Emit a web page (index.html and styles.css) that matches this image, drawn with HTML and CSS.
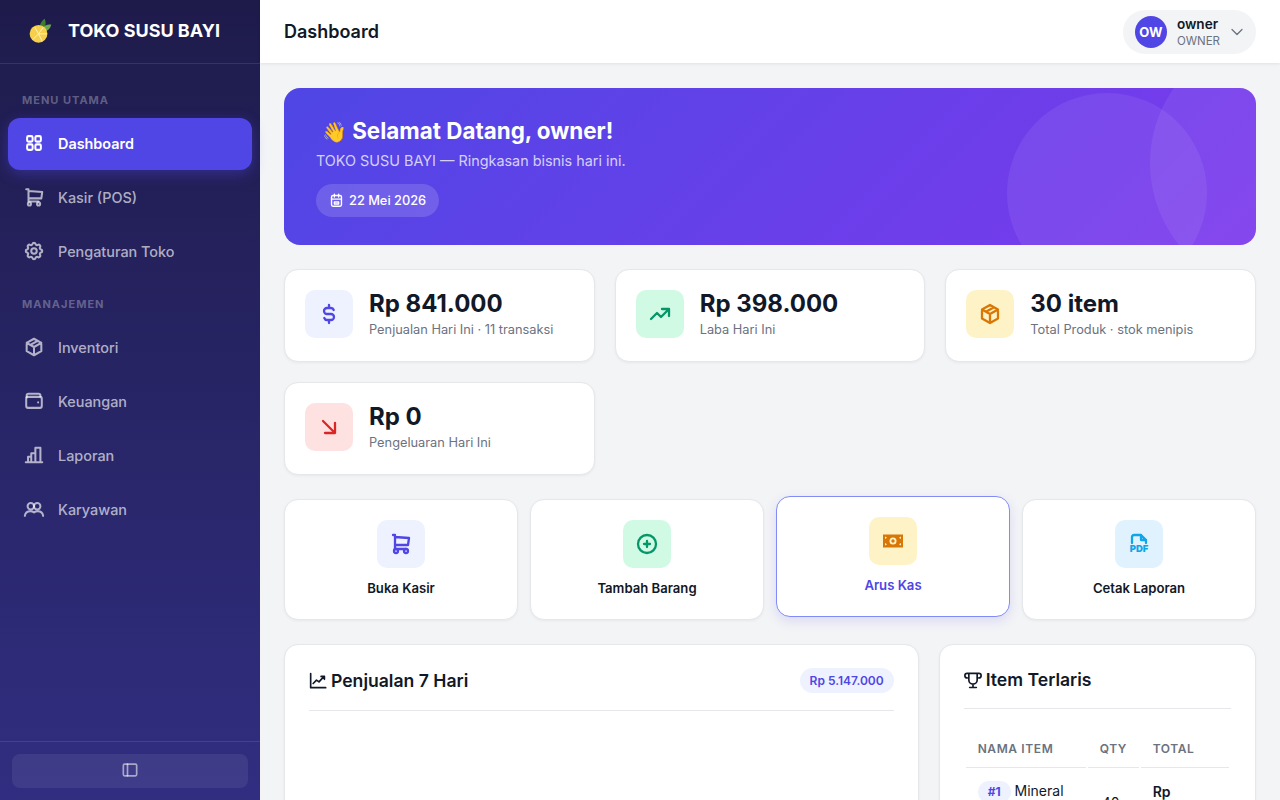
FILE: index.html
```html
<!DOCTYPE html>
<html lang="id">
<head>
	<meta charset="UTF-8">
	<meta name="viewport" content="width=device-width, initial-scale=1.0">
	<title>Dashboard - TOKO SUSU BAYI</title>
	<link rel="stylesheet" href="styles.css">
</head>
<body>
	<aside class="sidebar">
		<div class="brand">
			<svg class="brand-logo" viewBox="0 0 32 32">
				<path d="M17 15c-1-5 1-9 5-12 2 4 1 9-2 12z" fill="#3f7d2c"/>
				<path d="M19 15c1-4 4-6 10-6-1 5-5 8-9 8z" fill="#6aa84f"/>
				<circle cx="15.500" cy="19" r="9.500" fill="#f6d04d"/>
				<path d="M15.500 19l-4-7M15.500 19l5-7M15.500 19h9M15.500 19l-6 6M15.500 19l4 8" stroke="#fff3c0" stroke-width="1" fill="none"/>
			</svg>
			<span class="brand-name">TOKO SUSU BAYI</span>
		</div>

		<nav class="nav">
			<div class="nav-label">MENU UTAMA</div>
			<a class="nav-item active">
				<svg class="icon" viewBox="0 0 24 24"><rect x="4.500" y="4.500" width="6" height="6" rx="1.500"/><rect x="13.500" y="4.500" width="6" height="6" rx="1.500"/><rect x="4.500" y="13.500" width="6" height="6" rx="1.500"/><rect x="13.500" y="13.500" width="6" height="6" rx="1.500"/></svg>
				Dashboard
			</a>
			<a class="nav-item">
				<svg class="icon" viewBox="0 0 24 24"><circle cx="7" cy="19.500" r="1.700"/><circle cx="17" cy="19.500" r="1.700"/><path d="M17 17H6V3.500H3.500M6 5.500l15 1-1 7H6"/></svg>
				Kasir (POS)
			</a>
			<a class="nav-item">
				<svg class="icon" viewBox="0 0 24 24"><path d="M10.325 4.317c.426-1.756 2.924-1.756 3.35 0a1.724 1.724 0 0 0 2.573 1.066c1.543-.94 3.31.826 2.37 2.37a1.724 1.724 0 0 0 1.065 2.572c1.756.426 1.756 2.924 0 3.35a1.724 1.724 0 0 0-1.066 2.573c.94 1.543-.826 3.31-2.37 2.37a1.724 1.724 0 0 0-2.572 1.065c-.426 1.756-2.924 1.756-3.35 0a1.724 1.724 0 0 0-2.573-1.066c-1.543.94-3.31-.826-2.37-2.37a1.724 1.724 0 0 0-1.065-2.572c-1.756-.426-1.756-2.924 0-3.35a1.724 1.724 0 0 0 1.066-2.573c-.94-1.543.826-3.31 2.37-2.37 1 .608 2.296.07 2.572-1.065z"/><circle cx="12" cy="12" r="3"/></svg>
				Pengaturan Toko
			</a>

			<div class="nav-label second">MANAJEMEN</div>
			<a class="nav-item">
				<svg class="icon" viewBox="0 0 24 24"><path d="M12 3l8 4.500v9L12 21l-8-4.500v-9zM12 12l8-4.500M12 12v9M12 12L4 7.500M16 5.250l-8 4.500"/></svg>
				Inventori
			</a>
			<a class="nav-item">
				<svg class="icon" viewBox="0 0 24 24"><path d="M4 8V6a2 2 0 0 1 2-2h11a2 2 0 0 1 2 2v1"/><rect x="3.500" y="7.500" width="17" height="12" rx="2"/><path d="M16.500 13.500h.01"/></svg>
				Keuangan
			</a>
			<a class="nav-item">
				<svg class="icon" viewBox="0 0 24 24"><path d="M3 20h18M5.500 20v-6h3.500v6M9 20V10h4.500v10M13.500 20V4h5.500v16"/></svg>
				Laporan
			</a>
			<a class="nav-item">
				<svg class="icon" viewBox="0 0 24 24"><circle cx="8.500" cy="9" r="3.500"/><circle cx="15.500" cy="9" r="3.500"/><path d="M2 19.500c.5-3 3-5 6-5 1.500 0 2.900.4 4 1.200M22 19.500c-.5-3-3-5-6-5-1.500 0-2.900.4-4 1.200"/></svg>
				Karyawan
			</a>
		</nav>

		<div class="sidebar-footer">
			<button class="collapse-btn">
				<svg class="icon small" viewBox="0 0 24 24"><rect x="4" y="5" width="16" height="14" rx="1.500"/><path d="M9 5v14"/></svg>
			</button>
		</div>
	</aside>

	<div class="main">
		<header class="topbar">
			<h1>Dashboard</h1>
			<div class="user-chip">
				<span class="avatar">OW</span>
				<span class="user-text">
					<span class="user-name">owner</span>
					<span class="user-role">OWNER</span>
				</span>
				<svg class="icon chevron" viewBox="0 0 24 24"><path d="M6 9l6 6 6-6"/></svg>
			</div>
		</header>

		<main class="content">
			<section class="banner">
				<div class="banner-circle one"></div>
				<div class="banner-circle two"></div>
				<h2><span class="wave">👋</span> Selamat Datang, owner!</h2>
				<p>TOKO SUSU BAYI — Ringkasan bisnis hari ini.</p>
				<span class="date-pill">
					<svg class="icon tiny" viewBox="0 0 24 24"><rect x="5" y="5" width="14" height="15" rx="2"/><path d="M5 10h14M9 3v4M15 3v4M9 14h6v3H9z"/></svg>
					22 Mei 2026
				</span>
			</section>

			<section class="stats">
				<div class="stat-card">
					<div class="icon-box indigo">
						<svg class="icon" viewBox="0 0 24 24"><path d="M16.700 8a3 3 0 0 0-2.700-2h-4a3 3 0 0 0 0 6h4a3 3 0 0 1 0 6h-4a3 3 0 0 1-2.700-2M12 3v3m0 12v3"/></svg>
					</div>
					<div>
						<div class="stat-value">Rp 841.000</div>
						<div class="stat-label">Penjualan Hari Ini · 11 transaksi</div>
					</div>
				</div>
				<div class="stat-card">
					<div class="icon-box green">
						<svg class="icon" viewBox="0 0 24 24"><path d="M3 17l6-6 4 4 8-8M14 7h7v7"/></svg>
					</div>
					<div>
						<div class="stat-value">Rp 398.000</div>
						<div class="stat-label">Laba Hari Ini</div>
					</div>
				</div>
				<div class="stat-card">
					<div class="icon-box amber">
						<svg class="icon" viewBox="0 0 24 24"><path d="M12 3l8 4.500v9L12 21l-8-4.500v-9zM12 12l8-4.500M12 12v9M12 12L4 7.500M16 5.250l-8 4.500"/></svg>
					</div>
					<div>
						<div class="stat-value">30 item</div>
						<div class="stat-label">Total Produk · stok menipis</div>
					</div>
				</div>
				<div class="stat-card">
					<div class="icon-box red">
						<svg class="icon" viewBox="0 0 24 24"><path d="M6 6l12 12M18 8v10H8"/></svg>
					</div>
					<div>
						<div class="stat-value">Rp 0</div>
						<div class="stat-label">Pengeluaran Hari Ini</div>
					</div>
				</div>
			</section>

			<section class="actions">
				<a class="action-card">
					<div class="icon-box indigo">
						<svg class="icon" viewBox="0 0 24 24"><circle cx="7" cy="19" r="2"/><circle cx="17" cy="19" r="2"/><path d="M17 17H6V3H4M6 5l14 1-1 7H6"/></svg>
					</div>
					Buka Kasir
				</a>
				<a class="action-card">
					<div class="icon-box green">
						<svg class="icon" viewBox="0 0 24 24"><circle cx="12" cy="12" r="9"/><path d="M9 12h6M12 9v6"/></svg>
					</div>
					Tambah Barang
				</a>
				<a class="action-card hovered">
					<div class="icon-box amber">
						<svg class="icon filled" viewBox="0 0 24 24"><path fill-rule="evenodd" d="M2 5.500h20v13H2zM12 8.500a3.500 3.500 0 1 0 0 7 3.500 3.500 0 0 0 0-7zM12 10.300a1.700 1.700 0 1 1 0 3.400 1.700 1.700 0 0 1 0-3.400zM4 7.500v2.500l2-1.200zM20 7.500v2.500l-2-1.200zM4 16.500V14l2 1.200zM20 16.500V14l-2 1.200z"/></svg>
					</div>
					Arus Kas
				</a>
				<a class="action-card">
					<div class="icon-box sky">
						<svg class="icon pdf" viewBox="0 0 24 24"><path d="M5 11V5a2 2 0 0 1 2-2h7l5 5v3M14 3v5h5"/><text x="12" y="20" text-anchor="middle">PDF</text></svg>
					</div>
					Cetak Laporan
				</a>
			</section>

			<section class="panels">
				<div class="panel">
					<div class="panel-head">
						<h3><svg class="icon" viewBox="0 0 24 24"><path d="M2 3v17h18M5 15l4-4 3 2 6-6.500M14.500 6.500H18.500V10"/></svg> Penjualan 7 Hari</h3>
						<span class="total-pill">Rp 5.147.000</span>
					</div>
				</div>
				<div class="panel">
					<div class="panel-head side">
						<h3><svg class="icon trophy" viewBox="0 0 24 24"><path d="M8 21h8M12 17v4M7 4h10M17 4v8a5 5 0 0 1-10 0V4M5 9.500a2.750 2.750 0 1 1 0-5.500h2M19 9.500a2.750 2.750 0 1 0 0-5.500h-2"/></svg> Item Terlaris</h3>
					</div>
					<table class="top-items">
						<thead>
							<tr><th class="col-name">NAMA ITEM</th><th class="col-qty">QTY</th><th>TOTAL</th></tr>
						</thead>
						<tbody>
							<tr>
								<td><span class="rank">#1</span> Mineral Water</td>
								<td class="qty">40x</td>
								<td class="total">Rp 200.000</td>
							</tr>
						</tbody>
					</table>
				</div>
			</section>
		</main>
	</div>
</body>
</html>
```

FILE: styles.css
```css
* {
	box-sizing: border-box;
}

html, body {
	height: 100%;
	overflow: hidden;
}

body {
	margin: 0;
	display: flex;
	font-family: "Inter", "Noto Sans", sans-serif;
	background-color: #f3f4f6;
	color: #111827;
}

.icon {
	width: 24px;
	height: 24px;
	flex: none;
	fill: none;
	stroke: currentColor;
	stroke-width: 2;
	stroke-linecap: round;
	stroke-linejoin: round;
}

.icon.small {
	width: 20px;
	height: 20px;
}

.icon.tiny {
	width: 17px;
	height: 17px;
	margin-left: -2px;
}

/* Sidebar */
.sidebar {
	width: 260px;
	height: 800px;
	flex: none;
	display: flex;
	flex-direction: column;
	background: linear-gradient(180deg, #1e1b4b 0%, #312e81 100%);
}

.brand {
	height: 64px;
	flex: none;
	display: flex;
	align-items: center;
	gap: 14px;
	padding: 0 24px 2px;
	border-bottom: 1px solid rgba(255,255,255,0.1);
}

.brand-logo {
	width: 30px;
	height: 30px;
	flex: none;
}

.brand-name {
	font-size: 18px;
	font-weight: 700;
	color: #fff;
	white-space: nowrap;
}

.nav {
	flex: 1;
	padding: 16px 8px;
}

.nav-label {
	padding: 13px 14px 11px;
	font-size: 11px;
	line-height: 14px;
	font-weight: 700;
	letter-spacing: 1px;
	color: rgba(255,255,255,0.3);
}

.nav-label.second {
	margin-top: 6px;
}

.nav-item {
	height: 52px;
	margin-bottom: 2px;
	display: flex;
	align-items: center;
	gap: 13px;
	padding: 0 15px 2px;
	border-radius: 12px;
	font-size: 14.4px;
	font-weight: 500;
	color: rgba(255,255,255,0.65);
}

.nav-item .icon {
	width: 22px;
	height: 22px;
	stroke-width: 2.2;
}

.nav-item.active {
	background-color: #4f46e5;
	color: #fff;
	font-weight: 600;
	box-shadow: 0 4px 14px rgba(79,70,229,0.4);
}

.sidebar-footer {
	height: 59px;
	flex: none;
	padding: 12px;
	border-top: 1px solid rgba(255,255,255,0.1);
}

.collapse-btn {
	width: 100%;
	height: 34px;
	display: flex;
	align-items: center;
	justify-content: center;
	padding: 0 0 2px;
	border: none;
	border-radius: 8px;
	background-color: rgba(255,255,255,0.07);
	color: rgba(255,255,255,0.55);
}

/* Top bar */
.main {
	flex: 1;
	min-width: 0;
	display: flex;
	flex-direction: column;
	height: 800px;
}

.topbar {
	height: 63px;
	flex: none;
	display: flex;
	align-items: center;
	justify-content: space-between;
	padding: 0 24px;
	background-color: #fff;
	box-shadow: 0 1px 3px rgba(0,0,0,0.08);
	position: relative;
}

.topbar h1 {
	margin: 0;
	font-size: 18px;
	font-weight: 600;
	color: #111827;
}

.user-chip {
	height: 44px;
	display: flex;
	align-items: center;
	gap: 10px;
	padding: 0 9px 0 12px;
	border-radius: 22px;
	background-color: #f3f4f6;
}

.avatar {
	width: 32px;
	height: 32px;
	display: flex;
	align-items: center;
	justify-content: center;
	border-radius: 50%;
	background-color: #4f46e5;
	color: #fff;
	font-size: 13px;
	font-weight: 700;
}

.user-text {
	display: flex;
	flex-direction: column;
	padding-top: 2px;
}

.user-name {
	font-size: 13.6px;
	line-height: 16px;
	font-weight: 600;
}

.user-role {
	margin-top: 1px;
	font-size: 11.5px;
	line-height: 16px;
	color: #6b7280;
}

.chevron {
	width: 20px;
	height: 20px;
	margin-left: -3px;
	color: #6b7280;
	stroke-width: 1.5;
}

/* Content */
.content {
	flex: 1;
	overflow: hidden;
	padding: 25px 24px 24px;
}

.banner {
	position: relative;
	overflow: hidden;
	height: 157px;
	padding: 27px 32px;
	margin-bottom: 24px;
	border-radius: 16px;
	background: linear-gradient(135deg, #4f46e5 0%, #7c3aed 100%);
	color: #fff;
}

.banner-circle {
	position: absolute;
	border-radius: 50%;
	background-color: rgba(255,255,255,0.07);
}

.banner-circle.one {
	left: 866px;
	top: -55px;
	width: 260px;
	height: 260px;
}

.banner-circle.two {
	left: 723px;
	top: 5px;
	width: 200px;
	height: 200px;
}

.banner h2 {
	margin: 0 0 4px;
	font-size: 22.4px;
	line-height: 32px;
	font-weight: 700;
}

.wave {
	font-family: "Noto Color Emoji", sans-serif;
	font-size: 20px;
	margin-left: 6px;
}

.banner p {
	margin: 0 0 14px;
	font-size: 14.4px;
	line-height: 18px;
	color: rgba(255,255,255,0.75);
}

.date-pill {
	display: inline-flex;
	align-items: center;
	gap: 4px;
	height: 33px;
	padding: 0 13px 0 14px;
	border-radius: 17px;
	background-color: rgba(255,255,255,0.15);
	font-size: 12.8px;
	font-weight: 500;
}

.stats {
	display: grid;
	grid-template-columns: repeat(3, 1fr);
	gap: 20px;
	margin-bottom: 24px;
}

.stat-card {
	height: 93px;
	display: flex;
	align-items: flex-start;
	gap: 16px;
	padding: 20px;
	border: 1px solid #e5e7eb;
	border-radius: 14px;
	background-color: #fff;
	box-shadow: 0 1px 3px rgba(0,0,0,0.05);
}

.icon-box {
	width: 48px;
	height: 48px;
	flex: none;
	display: flex;
	align-items: center;
	justify-content: center;
	border-radius: 10px;
}

.icon-box .icon {
	stroke-width: 2.3;
}

.icon-box.indigo {
	background-color: #eef2ff;
	color: #4f46e5;
}

.icon-box.green {
	background-color: #d1fae5;
	color: #059669;
}

.icon-box.amber {
	background-color: #fef3c7;
	color: #d97706;
}

.icon-box.red {
	background-color: #fee2e2;
	color: #dc2626;
}

.icon-box.sky {
	background-color: #e0f2fe;
	color: #0ea5e9;
}

.stat-value {
	font-size: 24px;
	line-height: 28px;
	font-weight: 700;
	color: #111827;
}

.stat-label {
	margin-top: 4px;
	font-size: 12.8px;
	line-height: 16px;
	color: #6b7280;
}

.actions {
	display: grid;
	grid-template-columns: repeat(4, 1fr);
	gap: 12px;
	margin-bottom: 24px;
}

.action-card {
	height: 121px;
	display: flex;
	flex-direction: column;
	align-items: center;
	gap: 12px;
	padding-top: 20px;
	border: 1px solid #e5e7eb;
	border-radius: 14px;
	background-color: #fff;
	font-size: 13.12px;
	line-height: 16px;
	font-weight: 600;
	color: #111827;
	box-shadow: 0 1px 3px rgba(0,0,0,0.05);
}

.action-card.hovered {
	transform: translateY(-3px);
	border-color: #818cf8;
	color: #4f46e5;
	box-shadow: 0 4px 12px rgba(79,70,229,0.15);
}

.icon.filled {
	fill: currentColor;
	stroke: none;
}

.icon.pdf text {
	font-family: "Inter", sans-serif;
	font-size: 9.5px;
	font-weight: 900;
	fill: currentColor;
	stroke: none;
}

.panels {
	display: grid;
	grid-template-columns: 2fr 1fr;
	gap: 20px;
}

.panel {
	height: 400px;
	padding: 24px;
	border: 1px solid #e5e7eb;
	border-radius: 14px;
	background-color: #fff;
	box-shadow: 0 1px 3px rgba(0,0,0,0.05);
}

.panel-head {
	display: flex;
	align-items: center;
	justify-content: space-between;
	height: 42px;
	padding-bottom: 18px;
	border-bottom: 1px solid #e5e7eb;
}

.panel-head.side {
	height: 40px;
}

.panel-head h3 {
	margin: 0;
	display: flex;
	align-items: center;
	gap: 2px;
	font-size: 17.6px;
	font-weight: 600;
}

.panel-head h3 .icon {
	width: 20px;
	height: 20px;
}

.panel-head h3 .icon.trophy {
	margin: 0 1px 0 -1px;
}

.total-pill {
	height: 25px;
	display: flex;
	align-items: center;
	padding: 0 10px;
	border-radius: 13px;
	background-color: #eef2ff;
	color: #4f46e5;
	font-size: 12px;
	font-weight: 600;
}

.top-items {
	width: 100%;
	margin-top: 21px;
	table-layout: fixed;
	border-spacing: 2px 0;
}

.col-name {
	width: 120px;
}

.col-qty {
	width: 51px;
}

.top-items th {
	padding: 11px 12px 10px;
	border-bottom: 1px solid #e5e7eb;
	text-align: left;
	font-size: 12px;
	line-height: 16px;
	font-weight: 600;
	letter-spacing: 0.6px;
	color: #6b7280;
}

.top-items td {
	padding: 12px;
	font-size: 14px;
	line-height: 22px;
	vertical-align: middle;
}

.top-items td.qty {
	padding: 12px 0 12px 14px;
}

.rank {
	display: inline-block;
	padding: 1px 10px;
	border-radius: 12px;
	background-color: #eef2ff;
	color: #4f46e5;
	font-size: 12px;
	line-height: 20px;
	font-weight: 700;
}

.total {
	font-weight: 600;
}
```
